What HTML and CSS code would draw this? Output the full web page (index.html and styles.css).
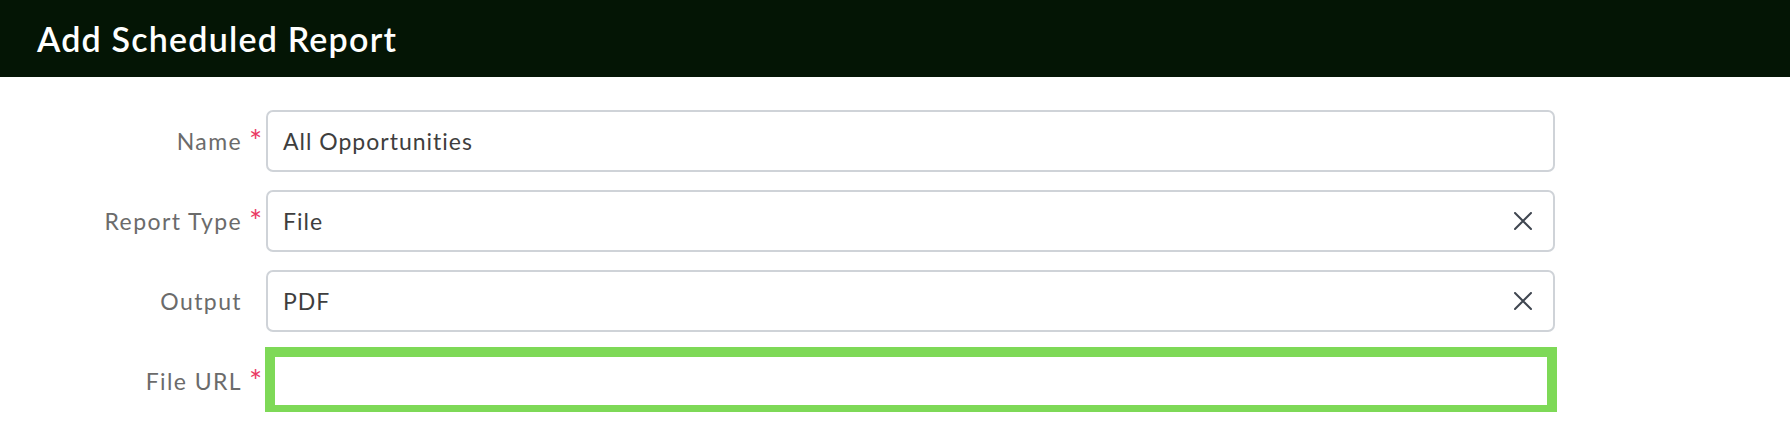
FILE: index.html
```html
<!DOCTYPE html>
<html lang="en">
<head>
<meta charset="utf-8">
<title>Add Scheduled Report</title>
<link rel="stylesheet" href="styles.css">
</head>
<body>
<header class="topbar">
  <h1 class="title">Add Scheduled Report</h1>
</header>
<main class="form">
  <label class="label">Name</label>
  <span class="req">*</span>
  <div class="field"><span class="value">All Opportunities</span></div>

  <label class="label">Report Type</label>
  <span class="req">*</span>
  <div class="field"><span class="value">File</span>
    <svg class="clear" viewBox="0 0 18 18" width="18" height="18" aria-hidden="true"><path d="M1 1L17 17M17 1L1 17" stroke="#3f4650" stroke-width="2" fill="none" stroke-linecap="round"/></svg>
  </div>

  <label class="label">Output</label>
  <span class="req"></span>
  <div class="field"><span class="value">PDF</span>
    <svg class="clear" viewBox="0 0 18 18" width="18" height="18" aria-hidden="true"><path d="M1 1L17 17M17 1L1 17" stroke="#3f4650" stroke-width="2" fill="none" stroke-linecap="round"/></svg>
  </div>

  <label class="label">File URL</label>
  <span class="req">*</span>
  <div class="field highlight"></div>
</main>
</body>
</html>
```

FILE: styles.css
```css
html, body {
  margin: 0;
  padding: 0;
  background: #ffffff;
}

body {
  font-family: Lato, "Open Sans", "Liberation Sans", sans-serif;
}

.topbar {
  height: 77px;
  background: #041505;
  display: flex;
  align-items: center;
  padding-left: 37px;
}

.title {
  margin: 0;
  color: #ffffff;
  font-size: 34px;
  font-weight: 600;
  letter-spacing: 1.2px;
}

.form {
  display: grid;
  grid-template-columns: 241px 25px 1289px;
  grid-auto-rows: 62px;
  row-gap: 18px;
  padding-top: 33px;
}

.label {
  align-self: center;
  text-align: right;
  color: #6b6b6b;
  font-size: 23px;
  letter-spacing: 1.4px;
  margin-right: -1px;
}

.req {
  align-self: start;
  padding-top: 15px;
  padding-left: 8px;
  color: #ea3a64;
  font-size: 31px;
  line-height: 1;
}

.field {
  box-sizing: border-box;
  border: 2px solid #cfd3d8;
  border-radius: 7px;
  display: flex;
  align-items: center;
  justify-content: space-between;
  padding: 0 21px 0 15px;
}

.value {
  color: #3e3e3e;
  font-size: 23px;
  letter-spacing: 1px;
}

.clear {
  display: block;
}

.field.highlight {
  border: 10px solid #7ed957;
  border-radius: 0;
  height: 68px;
  margin: -3px -2px 0 -1px;
}
```
